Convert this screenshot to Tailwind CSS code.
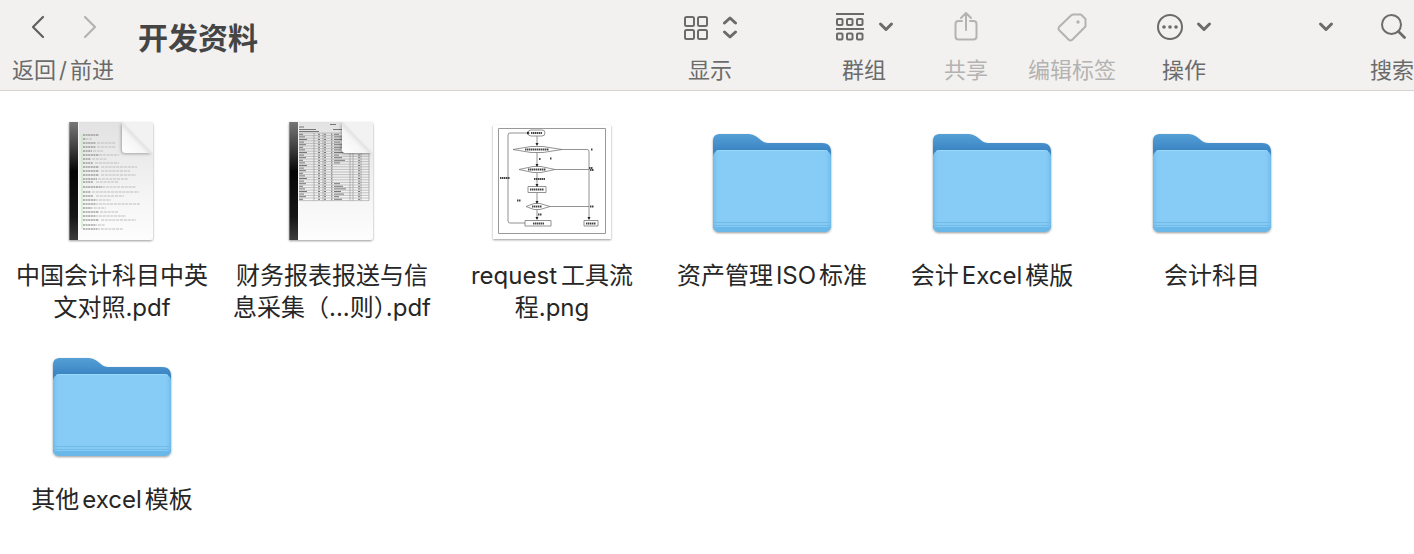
<!DOCTYPE html>
<html lang="zh-CN">
<head>
<meta charset="utf-8">
<meta name="viewport" content="width=device-width, initial-scale=1">
<title>开发资料</title>
<script src="https://cdn.jsdelivr.net/npm/@tailwindcss/browser@4"></script>
</head>
<body class="min-h-screen overflow-x-hidden bg-white font-['Inter','Noto_Sans_CJK_SC',sans-serif] text-[#262626]">

<svg class="absolute size-0" aria-hidden="true">
  <defs>
    <linearGradient id="back" x1="0" y1="0" x2="0" y2="1"><stop offset="0" stop-color="#559fd6"/><stop offset=".16" stop-color="#3c86c4"/><stop offset="1" stop-color="#3c86c4"/></linearGradient>
    <linearGradient id="edge"><stop offset="0" stop-color="#5fb0e2" stop-opacity=".6"/><stop offset=".06" stop-color="#86cbf6" stop-opacity="0"/><stop offset=".94" stop-color="#86cbf6" stop-opacity="0"/><stop offset="1" stop-color="#5fb0e2" stop-opacity=".6"/></linearGradient>
    <linearGradient id="paper" x1="0" y1="0" x2="0" y2="1"><stop offset="0" stop-color="#e2e2e2"/><stop offset=".6" stop-color="#f4f4f4"/><stop offset="1" stop-color="#fdfdfd"/></linearGradient>
    <linearGradient id="spine" x1="0" y1="0" x2="0" y2="1"><stop offset="0" stop-color="#777"/><stop offset=".2" stop-color="#444"/><stop offset=".42" stop-color="#050505"/><stop offset=".8" stop-color="#161616"/><stop offset="1" stop-color="#3c3c3c"/></linearGradient>
    <linearGradient id="curl" x1="0" y1="1" x2=".55" y2=".45"><stop offset="0" stop-color="#ffffff"/><stop offset=".7" stop-color="#f5f5f5"/><stop offset="1" stop-color="#d8d8d8"/></linearGradient>
    <filter id="shade" x="-10%" y="-10%" width="120%" height="125%"><feDropShadow dx="0" dy="1" stdDeviation="1" flood-color="#000" flood-opacity=".4"/></filter>
    <filter id="soft" x="-30%" y="-30%" width="160%" height="160%"><feDropShadow dx="-1" dy="1" stdDeviation="1.5" flood-color="#000" flood-opacity=".3"/></filter>
    <symbol id="folder" viewBox="0 0 128 128">
      <g filter="url(#shade)">
        <path d="M5 24c0-6 2-8 8-8h26c5 0 7 1 10 3l5 4c2 1.500 4 2 8 2h52c6 0 9 3 9 9v72c0 6-3 8-8 8H13c-6 0-8-3-8-8z" fill="url(#back)"/>
        <path d="M5 40c0-5 3-8 8-8h102c5 0 8 3 8 8v66c0 5-3 8-8 8H13c-5 0-8-3-8-8z" fill="#87ccf7"/>
        <path d="M5 40c0-5 3-8 8-8h102c5 0 8 3 8 8v66c0 5-3 8-8 8H13c-5 0-8-3-8-8z" fill="url(#edge)"/>
        <path d="M8 33.500c1-1 3-1 5-1h102c2 0 4 0 5 1" fill="none" stroke="#9bdafc"/>
        <path d="M5 104.500h118M5 107.500h118" stroke="#70bae7"/>
        <path d="M5 109h118c-.5 3-3 5-8 5H13c-5 0-7.500-2-8-5z" fill="#6ab8e8"/>
      </g>
    </symbol>
    <symbol id="pdf" viewBox="0 0 128 128">
      <path filter="url(#shade)" d="M21 4h81a3 3 0 0 1 3 3v112a3 3 0 0 1-3 3H21z" fill="url(#paper)"/>
    </symbol>
    <symbol id="binding" viewBox="0 0 128 128">
      <path d="M74 4v27a4 4 0 0 0 4 4h27V7a3 3 0 0 0-3-3z" fill="#f2f2f2"/>
      <path filter="url(#soft)" d="M74 4v27a4 4 0 0 0 4 4h26z" fill="url(#curl)"/>
      <path d="M22 4h8v118h-8a1 1 0 0 1-1-1V5a1 1 0 0 1 1-1z" fill="url(#spine)"/>
      <path d="M21.500 5v116" stroke="#aaa" stroke-opacity=".5"/>
      <path d="M30.500 4v118" stroke="#fff" stroke-opacity=".7"/>
    </symbol>
    <symbol id="down" viewBox="0 0 16 12"><path d="M2.500 3l5.500 5.500L13.500 3" fill="none" stroke="currentColor" stroke-width="3" stroke-linecap="round" stroke-linejoin="round"/></symbol>
  </defs>
</svg>

<header class="flex h-[91px] overflow-hidden border-b border-[#d5d4d3] bg-[#f2f1ef] text-[22px] leading-8 whitespace-nowrap text-[#6b6b6b]">
  <nav class="flex flex-none flex-col pl-3" aria-label="返回/前进">
    <div class="flex h-[54px] items-center gap-6 pl-3">
      <button aria-label="返回" class="flex size-7 items-center justify-center"><svg class="h-6 w-4" viewBox="0 0 16 24" fill="none" stroke="#606060" stroke-width="2.200" stroke-linecap="round" stroke-linejoin="round"><path d="M13 2L3 12l10 10"/></svg></button>
      <button aria-label="前进" disabled class="flex size-7 items-center justify-center"><svg class="h-6 w-4" viewBox="0 0 16 24" fill="none" stroke="#b4b3b2" stroke-width="2.200" stroke-linecap="round" stroke-linejoin="round"><path d="M3 2l10 10L3 22"/></svg></button>
    </div>
    <span>返回<span class="px-[3px]">/</span>前进</span>
  </nav>
  <h1 class="ml-6 flex-none pt-[18px] text-[30px] leading-10 font-bold text-[#454545]">开发资料</h1>

  <div class="ml-auto flex flex-none">
    <button class="mr-24 flex w-14 flex-col items-center">
      <span class="flex h-[54px] items-center gap-3">
        <svg class="size-7" viewBox="0 0 28 28" fill="none" stroke="currentColor" stroke-width="2"><rect x="3" y="4" width="9" height="9" rx="1.500"/><rect x="16" y="4" width="9" height="9" rx="1.500"/><rect x="3" y="17" width="9" height="9" rx="1.500"/><rect x="16" y="17" width="9" height="9" rx="1.500"/></svg>
        <svg class="h-6 w-4" viewBox="0 0 16 24" fill="none" stroke="currentColor" stroke-width="3" stroke-linecap="round" stroke-linejoin="round"><path d="M2.500 8L8 3l5.500 5M2.500 17L8 22l5.500-5"/></svg>
      </span>
      <span>显示</span>
    </button>
    <button class="mr-[50px] flex w-15 flex-col items-center">
      <span class="flex h-[54px] items-center gap-3">
        <svg class="h-8 w-8" viewBox="0 0 32 32" fill="none" stroke="currentColor" stroke-width="2"><path d="M2 3h28M2 18h28"/><rect x="3" y="8" width="5.500" height="6" rx="1"/><rect x="13" y="8" width="5.500" height="6" rx="1"/><rect x="23" y="8" width="5.500" height="6" rx="1"/><rect x="3" y="22.500" width="5.500" height="6" rx="1"/><rect x="13" y="22.500" width="5.500" height="6" rx="1"/><rect x="23" y="22.500" width="5.500" height="6" rx="1"/></svg>
        <svg class="h-3 w-4"><use href="#down"/></svg>
      </span>
      <span>群组</span>
    </button>
    <button disabled class="mr-10 flex flex-col items-center text-[#b4b3b2]">
      <span class="flex h-[54px] items-center">
        <svg class="h-8 w-7" viewBox="0 0 28 32" fill="none" stroke="currentColor" stroke-width="2" stroke-linecap="round" stroke-linejoin="round"><path d="M10 10H6.500a3 3 0 0 0-3 3v12.500a3 3 0 0 0 3 3h15a3 3 0 0 0 3-3V13a3 3 0 0 0-3-3H18M14 19V2.500M9 7l5-5 5 5"/></svg>
      </span>
      <span>共享</span>
    </button>
    <button disabled class="mr-10 flex flex-col items-center text-[#b4b3b2]">
      <span class="flex h-[54px] items-center">
        <svg class="size-8" viewBox="0 0 32 32" fill="none" stroke="currentColor" stroke-width="2" stroke-linejoin="round"><path d="M17.500 3.500h7.500l4.500 4.500v7.500L16.500 28.500c-1.300 1.300-2.700 1.300-4 0L3.500 19.500c-1.300-1.300-1.300-2.700 0-4L15 4.500q1-1 2.500-1z"/><circle cx="22" cy="11" r="1.700" fill="currentColor" stroke="none"/></svg>
      </span>
      <span>编辑标签</span>
    </button>
    <button class="mr-[106px] flex w-14 flex-col items-center">
      <span class="flex h-[54px] items-center gap-3">
        <svg class="size-7" viewBox="0 0 28 28"><circle cx="14" cy="14" r="12" fill="none" stroke="currentColor" stroke-width="2"/><g fill="currentColor"><circle cx="8" cy="14" r="1.800"/><circle cx="14" cy="14" r="1.800"/><circle cx="20" cy="14" r="1.800"/></g></svg>
        <svg class="h-3 w-4"><use href="#down"/></svg>
      </span>
      <span>操作</span>
    </button>
    <button aria-label="更多" class="mr-9 flex h-[54px] items-center"><svg class="h-3 w-4"><use href="#down"/></svg></button>
    <button class="flex flex-col items-center">
      <span class="flex h-[54px] items-center">
        <svg class="size-7" viewBox="0 0 28 28" fill="none" stroke="currentColor" stroke-width="2" stroke-linecap="round"><circle cx="13.500" cy="11.500" r="9.500"/><path d="M20.500 18.500l6 6" stroke-width="2.800"/></svg>
      </span>
      <span>搜索</span>
    </button>
  </div>
</header>

<main class="pt-[27px] pl-0.5">
  <ul class="grid grid-cols-[repeat(auto-fill,220px)] gap-y-[18px] text-2xl leading-8">
    <li><button class="flex w-full flex-col items-center gap-3.5">
      <svg class="size-32" viewBox="0 0 128 128">
        <use href="#pdf"/>
        <path d="M34 16v95" stroke="#b9edb5"/>
        <g id="lines" fill="none"></g>
        <path d="M86 15h6" stroke="#aaa" stroke-width=".8"/>
        <use href="#binding"/>
      </svg>
      <span class="min-h-16">中国会计科目中英<br>文对照.pdf</span>
    </button></li>
    <li><button class="flex w-full flex-col items-center gap-3.5">
      <svg class="size-32" viewBox="0 0 128 128">
        <use href="#pdf"/>
        <path d="M62 6.500h6M31 9h5M31 11.500h17M65 11.500h10M31 13.500h20M93 13.500h5" stroke="#777"/>
        <g id="sheet" fill="none"></g>
        <use href="#binding"/>
      </svg>
      <span class="min-h-16">财务报表报送与信<br>息采集（...则<span class="[font-feature-settings:'halt']">）</span>.pdf</span>
    </button></li>
    <li><button class="flex w-full flex-col items-center gap-3.5">
      <svg class="size-32" viewBox="0 0 128 128">
        <path filter="url(#shade)" d="M5 7h118v114H5z" fill="#fff"/>
        <path d="M10.500 10.500h107v105h-107z" fill="#fff" stroke="#999"/>
        <g fill="none" stroke="#777" stroke-width=".8">
          <rect x="40" y="12" width="17" height="6" rx="3"/>
          <path d="M49 18v9M49 34v14M49 55v13M49 75v10M49 92v9M37 105H22q-2 0-2-2V17q0-2 2-2h17M74 31.500h25q2 0 2 2V101M67 51.500h34M62 88.500h39"/>
          <path d="M25 31.500l18-3h12l19 3-19 3H43zM31 51.500l14-3h8l14 3-14 3h-8zM38 88.500l8-3h6l10 3-10 3h-6zM40 68.500h18v6H40zM37 102.500h26v5.500H37zM96 102.500h14v5.500H96z"/>
        </g>
        <path d="M39 13.500v3l3-1.500zM47.500 25h3L49 28zM47.500 46h3L49 49zM47.500 66h3L49 69zM47.500 83h3L49 86zM47.500 99h3l-1.500 3zM99.500 99h3l-1.500 3z" fill="#222"/>
        <g fill="none" stroke="#444" stroke-width="2" stroke-dasharray="1.500 .5">
          <path d="M43 15h11M37 31.500h24M40 51.500h18M42 71.500h14M44 88.500h10M45 105.500h11M98 105.500h10M51 41h2M62 40.500h2M46 61h11M12 60h10M29 82.500h4M50 96.500h4M103 31.500h2M101 50h4M102 52h4M102 88.500h4"/>
        </g>
      </svg>
      <span class="min-h-16">request<span class="pl-1">工</span>具流<br>程.png</span>
    </button></li>
    <li><button class="flex w-full flex-col items-center gap-3.5">
      <svg class="size-32"><use href="#folder"/></svg>
      <span class="min-h-16">资产管理<span class="px-[3px]">ISO</span>标准</span>
    </button></li>
    <li><button class="flex w-full flex-col items-center gap-3.5">
      <svg class="size-32"><use href="#folder"/></svg>
      <span class="min-h-16">会计<span class="px-[3px]">Excel</span>模版</span>
    </button></li>
    <li><button class="flex w-full flex-col items-center gap-3.5">
      <svg class="size-32"><use href="#folder"/></svg>
      <span class="min-h-16">会计科目</span>
    </button></li>
    <li><button class="flex w-full flex-col items-center gap-3.5">
      <svg class="size-32"><use href="#folder"/></svg>
      <span class="min-h-16">其他<span class="px-[3px]">excel</span>模板</span>
    </button></li>
  </ul>
</main>

<script>
  // Miniature page contents: [y, dark width, light start, light end]
  const rows = [[17,16,0,0],[21,2,37,44],[25,13,49,68],[29,13,49,68],[33,9,45,55],[37,16,51,71],[41,8,44,59],[45,10,47,71],[49,16,53,89],[53,16,53,82],[57,16,53,88],[61,14,50,80],[64,10,48,71],[69,19,54,88],[74,8,44,91],[78,10,48,76],[82,12,47,63],[86,12,47,92],[90,8,42,58],[94,16,52,70],[98,12,47,78],[102,16,53,88],[107,12,46,57],[111,14,49,75]];
  document.getElementById('lines').innerHTML = rows.map(([y, w, a, b]) =>
    `<path d="M35 ${y}h${w}" stroke="#777" stroke-width="1.200" stroke-dasharray="2 .6"/>` +
    (b ? `<path d="M${a} ${y}H${b}" stroke="#bbb" stroke-dasharray="3 .8"/>` : '')).join('');

  // Spreadsheet grid with cell marks
  let s = '';
  for (let i = 0; i < 27; i++) {
    const y = 15 + i * 2.6;
    s += `<path d="M30 ${y}H101" stroke="#aaa" stroke-width=".7"/>`;
    if (i < 26) s += `<path d="M31 ${y + 1.3}h${4 + (i * 7) % 5}M50 ${y + 1.3}h2M56 ${y + 1.3}h2M63 ${y + 1.3}h1M66 ${y + 1.3}h${i < 12 || i > 18 ? 5 + (i * 3) % 8 : 0}M90 ${y + 1.3}h2" stroke="#777" stroke-width="1"/>`;
  }
  for (const x of [46, 55, 64, 82, 85, 93, 101]) s += `<path d="M${x} 15V82.600" stroke="#999" stroke-width=".7"/>`;
  document.getElementById('sheet').innerHTML = s;
</script>
</body>
</html>
